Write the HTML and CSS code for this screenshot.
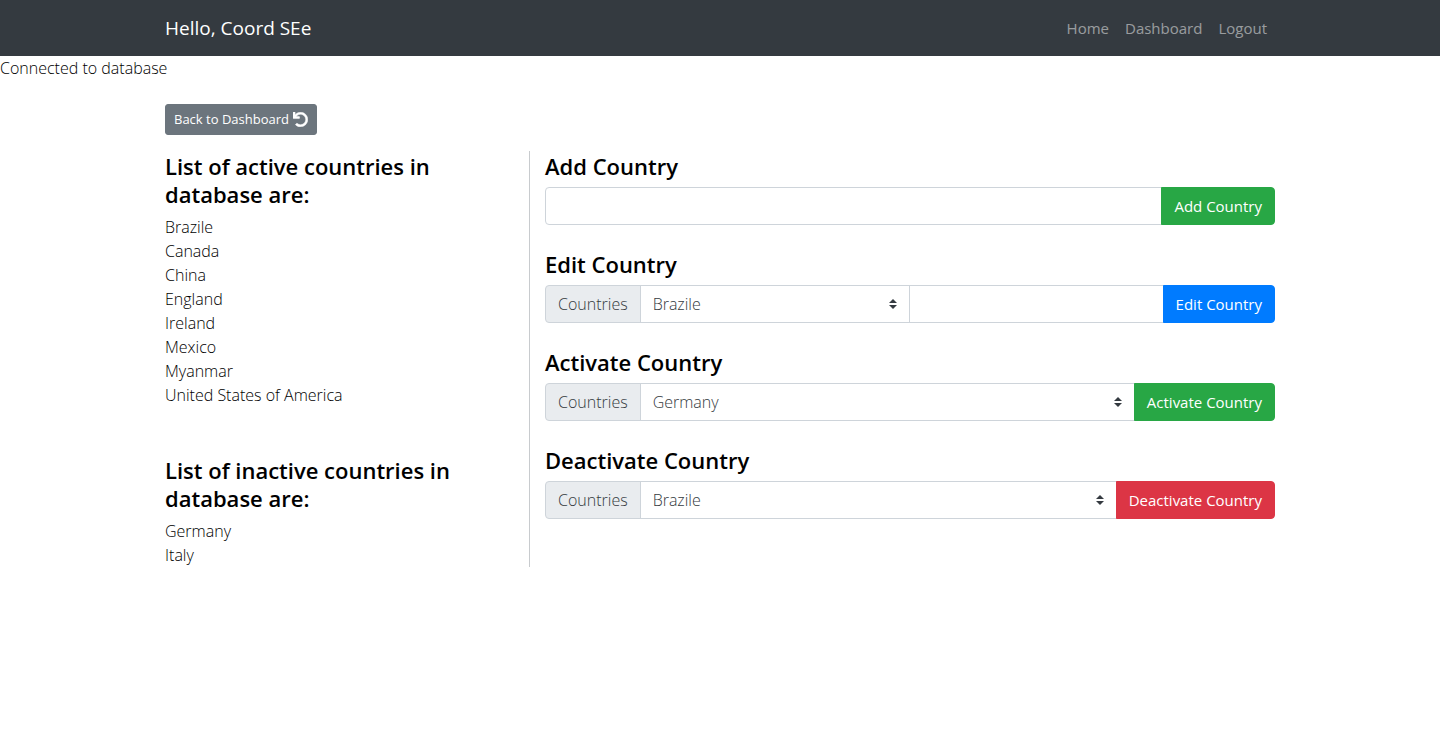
FILE: index.html
```html
<!DOCTYPE html>
<html lang="en">
<head>
  <meta charset="utf-8">
  <meta name="viewport" content="width=device-width, initial-scale=1">
  <title>Countries</title>
  <link rel="stylesheet" href="styles.css">
</head>
<body>
  <nav class="navbar">
    <div class="container navbar-inner">
      <a class="navbar-brand" href="#">Hello, Coord SEe</a>
      <ul class="navbar-nav">
        <li><a class="nav-link" href="#">Home</a></li>
        <li><a class="nav-link" href="#">Dashboard</a></li>
        <li><a class="nav-link" href="#">Logout</a></li>
      </ul>
    </div>
  </nav>
  <p class="status">Connected to database</p>
  <main class="container">
    <a class="btn btn-secondary btn-sm" href="#">Back to Dashboard
      <svg class="icon" viewBox="0 0 512 512" aria-hidden="true"><path fill="currentColor" stroke="currentColor" stroke-width="16" d="M212.333 224.333H12c-6.627 0-12-5.373-12-12V12C0 5.373 5.373 0 12 0h48c6.627 0 12 5.373 12 12v78.112C117.773 39.279 184.26 7.47 258.175 8.007c136.906.994 246.448 111.623 246.157 248.532C504.041 393.258 393.12 504 256.333 504c-64.089 0-122.496-24.313-166.51-64.215-5.099-4.622-5.334-12.554-.467-17.42l33.967-33.967c4.474-4.474 11.662-4.717 16.401-.525C170.76 415.336 211.58 432 256.333 432c97.268 0 176-78.716 176-176 0-97.267-78.716-176-176-176-58.496 0-110.28 28.476-142.274 72.333h98.274c6.627 0 12 5.373 12 12v48c0 6.627-5.373 12-12 12z"/></svg>
    </a>
    <div class="row">
      <div class="col-lists">
        <section>
          <h2 class="heading">List of active countries in database are:</h2>
          <ul class="list">
            <li>Brazile</li>
            <li>Canada</li>
            <li>China</li>
            <li>England</li>
            <li>Ireland</li>
            <li>Mexico</li>
            <li>Myanmar</li>
            <li>United States of America</li>
          </ul>
        </section>
        <section>
          <h2 class="heading">List of inactive countries in database are:</h2>
          <ul class="list">
            <li>Germany</li>
            <li>Italy</li>
          </ul>
        </section>
      </div>
      <div class="col-forms">
        <form>
          <h2 class="heading">Add Country</h2>
          <div class="input-group">
            <input class="control" type="text" aria-label="New country">
            <button class="btn btn-success" type="button">Add Country</button>
          </div>
        </form>
        <form>
          <h2 class="heading">Edit Country</h2>
          <div class="input-group">
            <label class="addon" for="edit">Countries</label>
            <select class="control select" id="edit"><option>Brazile</option><option>Canada</option><option>China</option></select>
            <input class="control" type="text" aria-label="New name">
            <button class="btn btn-primary" type="button">Edit Country</button>
          </div>
        </form>
        <form>
          <h2 class="heading">Activate Country</h2>
          <div class="input-group">
            <label class="addon" for="activate">Countries</label>
            <select class="control select" id="activate"><option>Germany</option><option>Italy</option></select>
            <button class="btn btn-success" type="button">Activate Country</button>
          </div>
        </form>
        <form>
          <h2 class="heading">Deactivate Country</h2>
          <div class="input-group">
            <label class="addon" for="deactivate">Countries</label>
            <select class="control select" id="deactivate"><option>Brazile</option><option>Canada</option><option>China</option></select>
            <button class="btn btn-danger" type="button">Deactivate Country</button>
          </div>
        </form>
      </div>
    </div>
  </main>
</body>
</html>
```
FILE: styles.css
```css
*, *::before, *::after { box-sizing: border-box; }

body {
  margin: 0;
  font-family: "Segoe UI", "Open Sans", "Noto Sans", sans-serif;
  font-size: 16px;
  font-weight: 300;
  line-height: 24px;
  color: #000;
  background: #fff;
}

ul { margin: 0; padding: 0; list-style: none; }
a { text-decoration: none; }

.container {
  width: 100%;
  max-width: 1140px;
  margin: 0 auto;
  padding: 0 15px;
}

.navbar { padding: 8px 0; background: #343a40; }
.navbar-inner { display: flex; align-items: center; justify-content: space-between; }
.navbar-brand { padding: 5px 0; font-size: 19px; font-weight: 400; line-height: 30px; color: #fff; }
.navbar-nav { display: flex; }
.nav-link { display: block; padding: 8px; font-size: 15px; font-weight: 400; color: rgba(255, 255, 255, 0.5); }

.status { margin: 0 0 24px; }

.row { display: flex; margin: 16px -15px 0; }
.col-lists {
  display: flex;
  flex: 0 0 33.3333%;
  flex-direction: column;
  gap: 48px;
  padding: 0 15px;
  border-right: 1px solid #c8cbce;
}
.col-forms {
  display: flex;
  flex: 1;
  flex-direction: column;
  gap: 24px;
  min-width: 0;
  padding: 0 15px;
}

.heading { margin: 0; padding: 1px 0 7px; font-size: 22px; font-weight: 600; line-height: 28px; color: #000; }

.btn {
  display: inline-block;
  padding: 6px 12px;
  border: 1px solid transparent;
  border-radius: 4px;
  font: inherit;
  font-size: 15px;
  font-weight: 400;
  white-space: nowrap;
  color: #fff;
}
.btn-sm { display: inline-flex; align-items: center; gap: 4px; padding: 4px 8px; border-radius: 3px; font-size: 13px; line-height: 21px; vertical-align: top; }
.btn-secondary { background: #6c757d; border-color: #6c757d; }
.btn-success { background: #28a745; border-color: #28a745; }
.btn-primary { background: #007bff; border-color: #007bff; }
.btn-danger { background: #dc3545; border-color: #dc3545; }
.icon { width: 15px; height: 15px; }

.input-group { display: flex; align-items: stretch; }
.input-group > * { border-radius: 0; }
.input-group > * + * { margin-left: -1px; }
.input-group > :first-child { border-radius: 4px 0 0 4px; }
.input-group > :last-child { border-radius: 0 4px 4px 0; }
.input-group > .btn { position: relative; }

.addon {
  padding: 6px 12px;
  border: 1px solid #ced4da;
  background: #e9ecef;
  color: #343a40;
}
.control {
  flex: 1 1 0;
  width: 1%;
  height: 38px;
  padding: 6px 12px;
  border: 1px solid #ced4da;
  background: #fff;
  font: inherit;
  color: #343a40;
}
.select {
  appearance: none;
  padding-right: 28px;
  background: #fff url("data:image/svg+xml,%3csvg xmlns='http://www.w3.org/2000/svg' viewBox='0 0 4 5'%3e%3cpath fill='%23343a40' d='M2 0L0 2h4zm0 5L0 3h4z'/%3e%3c/svg%3e") no-repeat right 12px center / 8px 10px;
}
```
